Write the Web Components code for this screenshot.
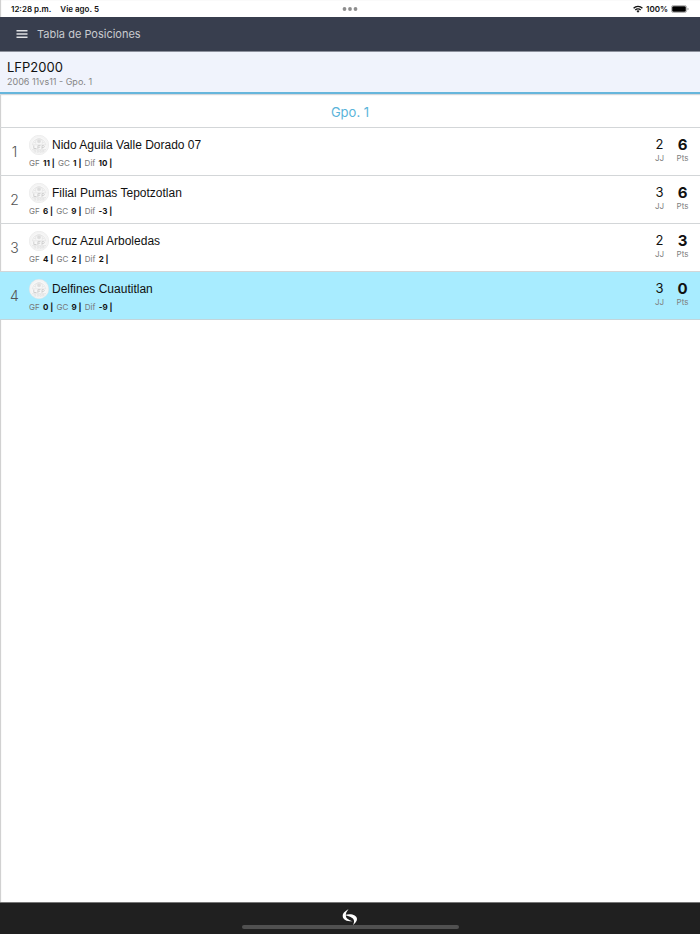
<!DOCTYPE html>
<html lang="es">
<head>
<meta charset="utf-8">
<meta name="viewport" content="width=device-width, initial-scale=1">
<title>Tabla de Posiciones</title>
<style>
body {
  margin: 0;
  background: #fff;
  color: #111;
  font-family: Inter, "Liberation Sans", sans-serif;
}
</style>
</head>
<body>
<app-screen>
  <status-bar slot="top" time="12:28 p.m." date="Vie ago. 5" battery="100%"></status-bar>
  <nav-bar slot="top">Tabla de Posiciones</nav-bar>
  <league-header slot="top">
    LFP2000
    <span slot="detail">2006 11vs11 - Gpo. 1</span>
  </league-header>
  <standings-table group="Gpo. 1"></standings-table>
  <home-bar slot="bottom"></home-bar>
</app-screen>

<template id="app-screen">
  <style>
    :host {
      display: flex;
      flex-direction: column;
      min-height: 100vh;
      box-sizing: border-box;
      box-shadow: inset 1px 0 1px #ccc;
    }
    main { flex: 1; }
  </style>
  <slot name="top"></slot>
  <main><slot></slot></main>
  <slot name="bottom"></slot>
</template>

<template id="status-bar">
  <style>
    :host {
      display: grid;
      grid-template-columns: 1fr auto 1fr;
      align-items: center;
      height: 17px;
      padding: 0 11px;
      font-size: 8px;
      line-height: 16px;
      font-weight: 600;
    }
    .left { display: flex; gap: 9px; }
    .right { display: flex; gap: 3px; align-items: center; justify-content: flex-end; }
    svg { display: block; }
  </style>
  <div class="left"><span id="time"></span><span id="date"></span></div>
  <svg width="16" height="4" viewBox="0 0 16 4" fill="#8e8e8e">
    <circle cx="2.5" cy="2" r="1.9"/><circle cx="8" cy="2" r="1.9"/><circle cx="13.5" cy="2" r="1.9"/>
  </svg>
  <div class="right">
    <svg width="10" height="8" viewBox="0 0 10 8" fill="none" stroke="#111" stroke-width="1.4">
      <path d="M.6 3.2a6.2 6.2 0 0 1 8.8 0"/>
      <path d="M2.3 5a3.8 3.8 0 0 1 5.4 0"/>
      <path d="M3.5 6.1 5 7.7l1.5-1.6a2.1 2.1 0 0 0-3 0z" fill="#111" stroke="none"/>
    </svg>
    <span id="battery"></span>
    <svg width="18" height="8" viewBox="0 0 18 8">
      <rect x=".4" y=".4" width="15.2" height="7.2" rx="2.2" fill="#fff" stroke="#999" stroke-width=".8"/>
      <rect x="1.2" y="1.2" width="13.6" height="5.6" rx="1.4" fill="#000"/>
      <path d="M16.5 2.7q1.2.4 1.2 1.3t-1.2 1.3z" fill="#999"/>
    </svg>
  </div>
</template>

<template id="nav-bar">
  <style>
    :host {
      display: flex;
      align-items: center;
      gap: 9px;
      height: 34px;
      padding: 0 16px;
      background: #383e4e;
      border-bottom: 1px solid #8c909c;
      color: #c9cbcf;
    }
    button {
      padding: 0;
      border: 0;
      background: none;
      color: #e0e1e4;
      cursor: pointer;
    }
    svg { display: block; }
    h1 { margin: 0; font-size: 11px; line-height: 16px; font-weight: 400; }
  </style>
  <button type="button" aria-label="Menú">
    <svg width="12" height="10" viewBox="0 0 12 10" stroke="currentColor" stroke-width="1.5">
      <path d="M.5 1.7h11M.5 5h11M.5 8.300h11"/>
    </svg>
  </button>
  <h1><slot></slot></h1>
</template>

<template id="league-header">
  <style>
    :host {
      display: block;
      padding: 7px 7px 4px;
      background: #f0f3fc;
      border-bottom: 2px solid #66b6dc;
      box-shadow: 0 1px 1px #d5d8dc;
    }
    h2 { margin: 0; font-size: 13px; line-height: 16px; font-weight: 400; }
    p { margin: 0; font-size: 9px; line-height: 13px; color: #858585; }
  </style>
  <h2><slot></slot></h2>
  <p><slot name="detail"></slot></p>
</template>

<template id="team-badge">
  <style>
    :host { display: block; }
    svg { display: block; }
  </style>
  <svg width="20" height="20" viewBox="0 0 20 20" fill="none" stroke="#dedede" stroke-width=".6">
    <circle cx="10" cy="10" r="9.700" fill="#f7f7f7" stroke="#e4e4e4"/>
    <circle cx="10" cy="10" r="8.400" stroke="#eee"/>
    <path d="M3.500 9.500a6.600 6.600 0 0 1 13 0M7 8.500a3.400 3.400 0 1 1 6 0"/>
    <path d="M10 4.600l1.800 1.200-.7 1.900H8.900l-.7-1.900z" fill="#ddd"/>
    <path d="M4.800 7.200l2 1M15.200 7.200l-2 1M2.800 9.800h14.400M3 14.600h14"/>
    <path d="M4.800 10.500v3h2.700M8.900 13.900v-3.300h2.600M8.900 12.200h2.200M13 13.900v-3.300h1.700q1.300.9 0 1.900H13" stroke="#d0d0d0" stroke-width="1"/>
    <path d="M4.700 15.600h2v1.400h-2M8.200 15.500h1.400v1.700H8.200zM10.800 15.500h1.400v1.700h-1.400zM13.300 15.500h1.700v1.300h-1.700z"/>
  </svg>
</template>

<template id="standings-table">
  <style>
    :host { display: block; }
    table { width: 100%; border-collapse: collapse; }
    caption {
      padding: 9px 0 6px;
      color: #5ab4da;
      font-size: 13px;
      line-height: 18px;
    }
    tr { height: 48px; }
    td { padding: 0; border-top: 1px solid #d3d6d8; vertical-align: middle; }
    tr:last-child td { border-bottom: 1px solid #c4d5da; }
    tr.current { background: #a8ecff; }
    .place {
      width: 29px;
      text-align: center;
      font-size: 14px;
      font-weight: 300;
      color: #555;
    }
    .name {
      display: flex;
      align-items: center;
      gap: 3px;
      font-family: "Liberation Sans", Arial, sans-serif;
      font-size: 12px;
      line-height: 20px;
    }
    .goals { margin-top: 3px; font-size: 8px; line-height: 10px; color: #777; }
    .goals b { margin: 0 1px; color: #111; }
    .stat { width: 23px; text-align: center; font-size: 13px; line-height: 17px; }
    .stat:last-child { padding-right: 6px; }
    .stat small { display: block; font-size: 8px; line-height: 10px; color: #808080; margin-bottom: 5px; }
    .stat strong { display: block; font-size: 15px; }
  </style>
  <table>
    <caption></caption>
    <tbody></tbody>
  </table>
</template>

<template id="home-bar">
  <style>
    :host {
      display: flex;
      flex-direction: column;
      align-items: center;
      padding: 6px 0 5px;
      background: #202020;
      border-top: 1px solid #777;
    }
    svg { display: block; }
    .grip { width: 31%; height: 4px; background: #505050; border-radius: 2px; }
  </style>
  <svg width="16" height="16" viewBox="0 0 16 16" fill="#fff">
    <path d="M6.500.3C3.800 1.800.7 3.800.7 6.900c0 3.800 4.500 5.700 10.300 5.400C7.500 11.200 4.300 9.800 3.900 7.200 3.500 4.700 4.600 2.500 6.500.3z"/>
    <path d="M2.600 6.200C7.600 3.900 15 5.600 15 10c0 2.400-2 4.400-4.100 6 1-2 1.500-3.700.9-5.100C10.900 8.600 7.400 7.100 2.600 6.200z"/>
  </svg>
  <div class="grip"></div>
</template>

<script>
class BaseElement extends HTMLElement {
  constructor() {
    super();
    const template = document.getElementById(this.localName);
    this.attachShadow({ mode: "open" });
    this.shadowRoot.appendChild(template.content.cloneNode(true));
  }
}

class AppScreen extends BaseElement {}
class NavBar extends BaseElement {}
class LeagueHeader extends BaseElement {}
class TeamBadge extends BaseElement {}
class HomeBar extends BaseElement {}

class StatusBar extends BaseElement {
  connectedCallback() {
    for (const key of ["time", "date", "battery"]) {
      this.shadowRoot.getElementById(key).textContent = this.getAttribute(key);
    }
  }
}

const teams = [
  { name: "Nido Aguila Valle Dorado 07", gf: 11, gc: 1, dif: 10, jj: 2, pts: 6 },
  { name: "Filial Pumas Tepotzotlan", gf: 6, gc: 9, dif: -3, jj: 3, pts: 6 },
  { name: "Cruz Azul Arboledas", gf: 4, gc: 2, dif: 2, jj: 2, pts: 3 },
  { name: "Delfines Cuautitlan", gf: 0, gc: 9, dif: -9, jj: 3, pts: 0, current: true },
];

class StandingsTable extends BaseElement {
  connectedCallback() {
    this.shadowRoot.querySelector("caption").textContent = this.getAttribute("group");
    this.shadowRoot.querySelector("tbody").innerHTML = teams.map((team, i) => `
      <tr class="${team.current ? "current" : ""}">
        <td class="place">${i + 1}</td>
        <td>
          <div class="name"><team-badge></team-badge><span>${team.name}</span></div>
          <div class="goals">GF <b>${team.gf} |</b> GC <b>${team.gc} |</b> Dif <b>${team.dif} |</b></div>
        </td>
        <td class="stat">${team.jj}<small>JJ</small></td>
        <td class="stat"><strong>${team.pts}</strong><small>Pts</small></td>
      </tr>`).join("");
  }
}

customElements.define("app-screen", AppScreen);
customElements.define("status-bar", StatusBar);
customElements.define("nav-bar", NavBar);
customElements.define("league-header", LeagueHeader);
customElements.define("team-badge", TeamBadge);
customElements.define("standings-table", StandingsTable);
customElements.define("home-bar", HomeBar);
</script>
</body>
</html>
